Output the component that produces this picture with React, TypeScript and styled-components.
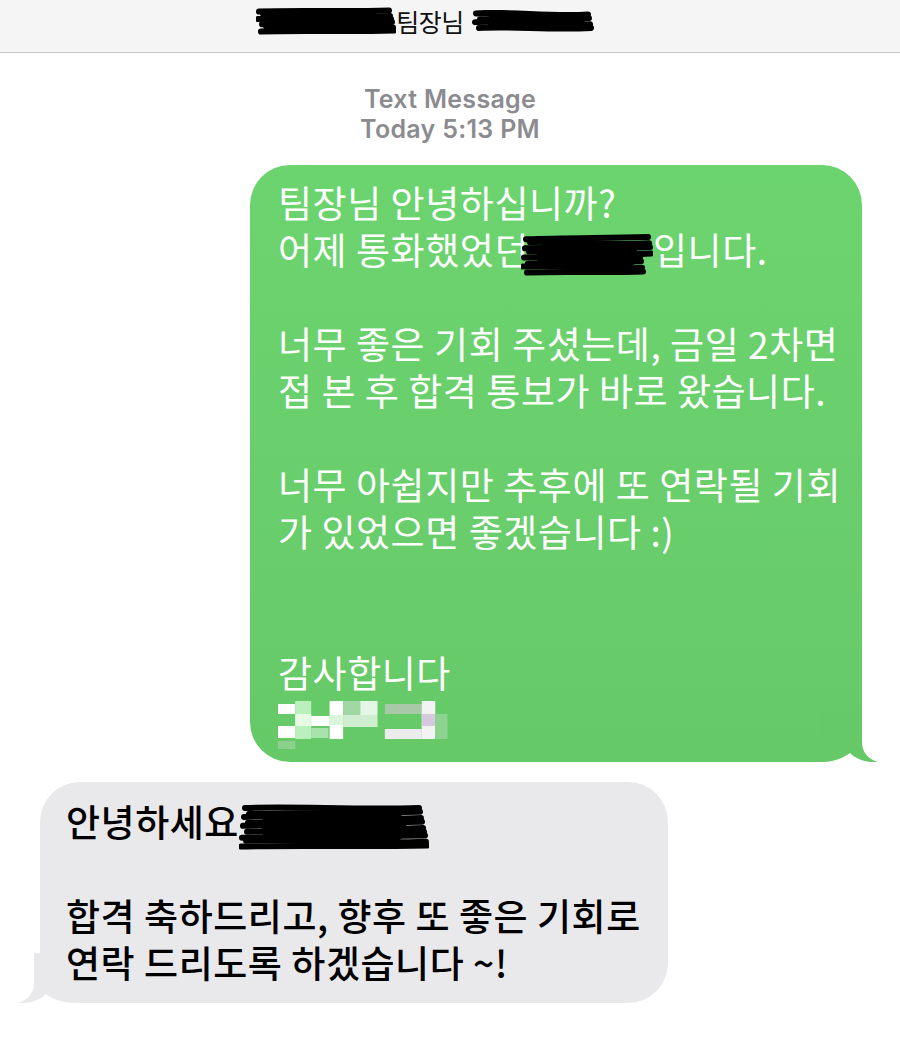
import React from "react";
import styled, { createGlobalStyle } from "styled-components";

const GlobalStyle = createGlobalStyle`
  html, body {
    margin: 0;
    padding: 0;
    background: #ffffff;
  }
  body {
    font-family: "Noto Sans CJK KR", "Noto Sans", sans-serif;
    -webkit-font-smoothing: antialiased;
  }
`;

const Page = styled.div`
  width: 900px;
  min-height: 1044px;
  background: #ffffff;
  display: flex;
  flex-direction: column;
`;

const Header = styled.header`
  height: 53px;
  background: #f5f5f5;
  border-bottom: 1.5px solid #c9c9c9;
  display: flex;
  justify-content: center;
  align-items: flex-start;
  padding: 5px 44px 0 0;
  box-sizing: border-box;
`;

const Title = styled.div`
  display: flex;
  align-items: center;
  height: 32px;
  font-family: "Noto Sans CJK KR", sans-serif;
  font-size: 25px;
  color: #111;
  letter-spacing: -0.5px;
`;

const Gap = styled.span<{ $w: number }>`
  display: inline-block;
  width: ${(p) => p.$w}px;
`;

const Redaction = styled.span<{ $w: number; $h: number }>`
  display: inline-block;
  width: ${(p) => p.$w}px;
  height: ${(p) => p.$h}px;
  vertical-align: middle;
  line-height: 0;
  & > svg {
    display: block;
  }
`;

const Thread = styled.main`
  display: flex;
  flex-direction: column;
  padding-top: 31px;
`;

const Meta = styled.div`
  display: flex;
  flex-direction: column;
  align-items: center;
  font-family: Inter, "Noto Sans", sans-serif;
  font-weight: 600;
  font-size: 25px;
  line-height: 30px;
  color: #8b8b90;
  letter-spacing: 0.3px;
  margin-bottom: 21px;
`;

const Row = styled.div<{ $side: "left" | "right" }>`
  display: flex;
  justify-content: ${(p) => (p.$side === "right" ? "flex-end" : "flex-start")};
  padding: ${(p) => (p.$side === "right" ? "0 38px 0 0" : "0 0 0 40px")};
  margin-bottom: 20px;
`;

const Bubble = styled.div<{ $variant: "sent" | "received" }>`
  position: relative;
  isolation: isolate;
  box-sizing: border-box;
  width: ${(p) => (p.$variant === "sent" ? 612 : 628)}px;
  border-radius: 40px;
  padding: ${(p) =>
    p.$variant === "sent" ? "14px 16px 19px 28px" : "16px 16px 17px 26px"};
  background: ${(p) =>
    p.$variant === "sent"
      ? "linear-gradient(180deg, #6cd46f 0%, #66c968 100%)"
      : "#e9e9eb"};
  color: ${(p) => (p.$variant === "sent" ? "#ffffff" : "#000000")};
  font-family: "Noto Sans CJK KR", "Noto Sans", sans-serif;
  font-weight: ${(p) => (p.$variant === "sent" ? 400 : 500)};
  font-size: 37px;
  letter-spacing: 0.55px;
`;

const Line = styled.div`
  height: 47px;
  line-height: 47px;
  white-space: pre;
`;

const TailSvg = styled.svg<{ $side: "left" | "right" }>`
  position: absolute;
  z-index: -1;
  bottom: 0;
  ${(p) => (p.$side === "right" ? "right: -16px;" : "left: -22px; transform: scaleX(-1);")}
`;

const Scribble = ({ w, h, seed = 0 }: { w: number; h: number; seed?: number }) => {
  const strokes: string[] = [];
  const n = Math.max(4, Math.round(h / 5));
  for (let i = 0; i < n; i++) {
    const y = 4 + ((h - 8) * i) / (n - 1);
    const j = ((i * 7 + seed * 3) % 5) - 2;
    const x0 = 2 + ((i * 13 + seed) % 9);
    const x1 = w - 2 - ((i * 11 + seed * 5) % 12);
    strokes.push(
      `M${x0},${y + j * 0.6} C${w * 0.3},${y - 2 + j} ${w * 0.6},${y + 2 - j} ${x1},${y - j * 0.5}`
    );
  }
  return (
    <svg width={w} height={h} viewBox={`0 0 ${w} ${h}`}>
      <rect x={w * 0.12} y={h * 0.2} width={w * 0.76} height={h * 0.6} rx={h * 0.25} fill="#000" />
      {strokes.map((d, i) => (
        <path key={i} d={d} stroke="#000" strokeWidth={6} strokeLinecap="round" fill="none" />
      ))}
    </svg>
  );
};

const mosaic: [number, number, number, number, string][] = [
  [0, 3, 14, 10, "#ffffff"],
  [14, 0, 13, 38, "#b9f0bd"],
  [14, 13, 13, 12, "#e6fbe6"],
  [27, 15, 15, 10, "#ffffff"],
  [42, 0, 11, 38, "#ffffff"],
  [42, 14, 11, 10, "#d9f5da"],
  [53, 0, 14, 14, "#9fd8a2"],
  [53, 14, 28, 12, "#cfeecf"],
  [67, 0, 14, 14, "#e4f7e4"],
  [0, 25, 14, 12, "#ffffff"],
  [27, 27, 14, 10, "#a8e3ab"],
  [87, 3, 30, 10, "#a7c9a8"],
  [87, 28, 30, 10, "#ececec"],
  [117, 0, 11, 38, "#f3f3f3"],
  [117, 13, 11, 12, "#d6c8de"],
  [128, 13, 10, 25, "#8bd38e"],
  [0, 40, 14, 8, "#8ccf8e"],
];

const Mosaic = () => (
  <svg width={172} height={48} viewBox="0 0 140 48" preserveAspectRatio="none">
    {mosaic.map(([x, y, w, h, c], i) => (
      <rect key={i} x={x} y={y} width={w} height={h} fill={c} />
    ))}
  </svg>
);

const Tail = ({ side, color }: { side: "left" | "right"; color: string }) => (
  <TailSvg $side={side} width={58} height={50} viewBox="0 0 58 50">
    <path
      d="M0,0 L42,0 L42,30 C42,40 48,47 58,50 C50,51 38,49 30,41 C22,47 12,50 0,50 Z"
      fill={color}
    />
  </TailSvg>
);

export default function App() {
  return (
    <>
      <GlobalStyle />
      <Page>
        <Header>
          <Title>
            <Redaction $w={140} $h={28}>
              <Scribble w={140} h={28} seed={1} />
            </Redaction>
            <span>팀장님</span>
            <Gap $w={8} />
            <Redaction $w={128} $h={22}>
              <Scribble w={128} h={22} seed={2} />
            </Redaction>
          </Title>
        </Header>
        <Thread>
          <Meta>
            <span>Text Message</span>
            <span>Today 5:13 PM</span>
          </Meta>
          <Row $side="right">
            <Bubble $variant="sent">
              <Line>팀장님 안녕하십니까?</Line>
              <Line>
                어제 통화했었던
                <Redaction $w={132} $h={42} style={{ marginLeft: -8 }}>
                  <Scribble w={132} h={42} seed={3} />
                </Redaction>
                입니다.
              </Line>
              <Line> </Line>
              <Line>너무 좋은 기회 주셨는데, 금일 2차면</Line>
              <Line>접 본 후 합격 통보가 바로 왔습니다.</Line>
              <Line> </Line>
              <Line>너무 아쉽지만 추후에 또 연락될 기회</Line>
              <Line>가 있었으면 좋겠습니다 :)</Line>
              <Line> </Line>
              <Line> </Line>
              <Line>감사합니다</Line>
              <Line>
                <Redaction $w={172} $h={48}>
                  <Mosaic />
                </Redaction>
              </Line>
              <Tail side="right" color="#66c968" />
            </Bubble>
          </Row>
          <Row $side="left">
            <Bubble $variant="received">
              <Line>
                안녕하세요
                <Redaction $w={190} $h={46}>
                  <Scribble w={190} h={46} seed={4} />
                </Redaction>
              </Line>
              <Line> </Line>
              <Line>합격 축하드리고, 향후 또 좋은 기회로</Line>
              <Line>연락 드리도록 하겠습니다 ~!</Line>
              <Tail side="left" color="#e9e9eb" />
            </Bubble>
          </Row>
        </Thread>
      </Page>
    </>
  );
}
